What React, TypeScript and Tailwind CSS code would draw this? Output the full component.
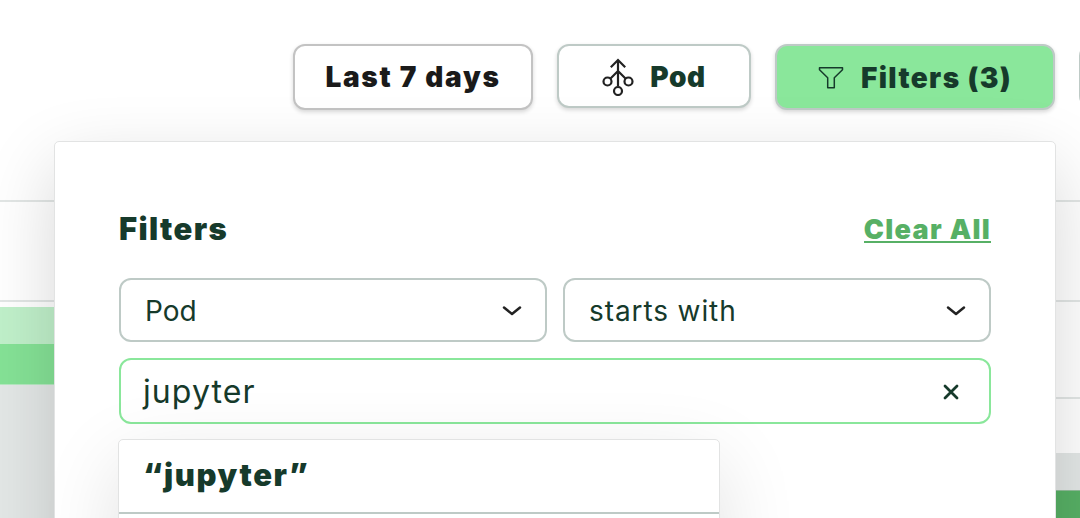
import type { ReactNode } from "react";

function PodIcon() {
  return (
    <svg width="32" height="38" viewBox="0 0 32 38" fill="none" stroke="#222222" strokeWidth="2.200" className="shrink-0">
      <path d="M16 28V2M8.800 9.200L16 2l7.200 7.200M8.500 20.500L16 13l7.500 7.500" />
      <circle cx="5.500" cy="23.500" r="4" />
      <circle cx="26.500" cy="23.500" r="4" />
      <circle cx="16" cy="33" r="4" />
    </svg>
  );
}

function FunnelIcon() {
  return (
    <svg width="26" height="24" viewBox="0 0 26 24" fill="none" stroke="#163a2b" strokeWidth="1.500" strokeLinejoin="round" className="shrink-0">
      <path d="M1.500 1.800h23v2l-8.200 8v10H9.700v-10L1.500 3.800z" />
    </svg>
  );
}

function Chevron() {
  return (
    <svg width="20" height="12" viewBox="0 0 20 12" fill="none" stroke="#222222" strokeWidth="2.500" strokeLinecap="round" strokeLinejoin="round">
      <path d="M2 2.500l8 6.500 8-6.500" />
    </svg>
  );
}

function Select({ children }: { children: ReactNode }) {
  return (
    <button className="flex h-16 flex-1 items-center justify-between rounded-xl border-2 border-[#becac6] bg-white pt-0.5 pr-[23px] pl-6 text-left">
      {children}
      <Chevron />
    </button>
  );
}

function Toolbar() {
  return (
    <header className="flex h-[200px] items-start gap-6 pt-[43px] pl-[293px] text-[28px] font-black">
      <button className="mt-px flex h-[66px] w-60 shrink-0 items-center justify-center rounded-xl border-2 border-[#c3c3c3] bg-white text-[#1a1a1a] shadow-[0_2px_4px_rgba(0,0,0,0.16)]">
        <span className="whitespace-nowrap tracking-[1.700px]">Last 7 days</span>
      </button>
      <button className="mt-px flex h-16 w-[194px] shrink-0 items-center justify-center gap-[16px] rounded-xl border-2 border-[#becac6] bg-white pt-0.5 shadow-[0_2px_4px_rgba(0,0,0,0.16)]">
        <PodIcon />
        <span className="tracking-[0.700px]">Pod</span>
      </button>
      <button className="mt-px flex h-[66px] w-[280px] shrink-0 items-center justify-center gap-[17px] rounded-xl border-2 border-[#becac6] bg-[#8ae79b] pt-0.5 shadow-[0_2px_4px_rgba(0,0,0,0.16)]">
        <FunnelIcon />
        <span className="whitespace-nowrap tracking-[1.400px]">Filters (3)</span>
      </button>
      <button aria-label="More" className="mt-px h-16 w-40 shrink-0 rounded-xl border-2 border-[#becac6] bg-white" />
    </header>
  );
}

function Chart() {
  return (
    <div className="flex h-[318px] justify-between">
      <div className="w-20">
        <div className="h-[100px] border-t-2 border-[#e2e6e5]" />
        <div className="h-[7px] border-t-2 border-[#e2e6e5]" />
        <div className="h-[37px] bg-[#c0f0ca]" />
        <div className="h-10 bg-[#85e296]" />
        <div className="h-[134px] border-t border-[#b5e9c0] bg-[#e3e7e6]" />
      </div>
      <div className="w-20">
        <div className="h-[100px] border-t-2 border-[#e2e6e5]" />
        <div className="h-[97px] border-t-2 border-[#e2e6e5]" />
        <div className="h-14 border-t-2 border-[#e2e6e5]" />
        <div className="h-[37px] bg-[#e3e7e6]" />
        <div className="h-7 border-t border-[#91bd99] bg-[#57b065]" />
      </div>
    </div>
  );
}

function FilterPanel() {
  return (
    <section className="absolute top-[141px] left-[54px] h-[640px] w-[1002px] rounded-[5px] border border-[#e2e3e3] bg-white px-16 pt-[62px] shadow-[0_24px_72px_rgba(0,0,0,0.16)]">
      <div className="flex h-[52px] items-center justify-between">
        <h2 className="-mt-0.5 text-[31px] font-black tracking-[1.400px]">Filters</h2>
        <a href="#" className="mt-px border-b-2 border-[#57b065] text-[27px] leading-[23px] font-black tracking-[1.300px] whitespace-nowrap text-[#57b065]">
          Clear All
        </a>
      </div>
      <div className="mt-[22px] flex gap-4 text-[28px]">
        <Select>
          <span>Pod</span>
        </Select>
        <Select>
          <span className="tracking-[0.900px]">starts with</span>
        </Select>
      </div>
      <div className="mt-4 flex h-[66px] items-center justify-between rounded-xl border-2 border-[#8ae79b] bg-white pt-0.5 pr-[30px] pl-[22px]">
        <span className="text-[32px] tracking-[1.100px]">jupyter</span>
        <svg width="16" height="16" viewBox="0 0 16 16" stroke="#163a2b" strokeWidth="2.800" strokeLinecap="round">
          <path d="M2 2l12 12M14 2L2 14" />
        </svg>
      </div>
      <div className="relative mt-[15px] -ml-px h-[400px] w-[602px] rounded-[5px] border border-[#e2e3e3] bg-white shadow-[0_24px_80px_rgba(0,0,0,0.12)]">
        <div className="flex h-[74px] items-center border-b-2 border-[#becac6] pb-0.5 pl-[24px] text-[31px] font-black tracking-[1.600px]">
          <span>“jupyter”</span>
        </div>
      </div>
    </section>
  );
}

export default function App() {
  return (
    <main className="relative h-[518px] w-full overflow-hidden bg-white font-['Inter','Liberation_Sans',sans-serif] text-[#163a2b]">
      <Toolbar />
      <Chart />
      <FilterPanel />
    </main>
  );
}
